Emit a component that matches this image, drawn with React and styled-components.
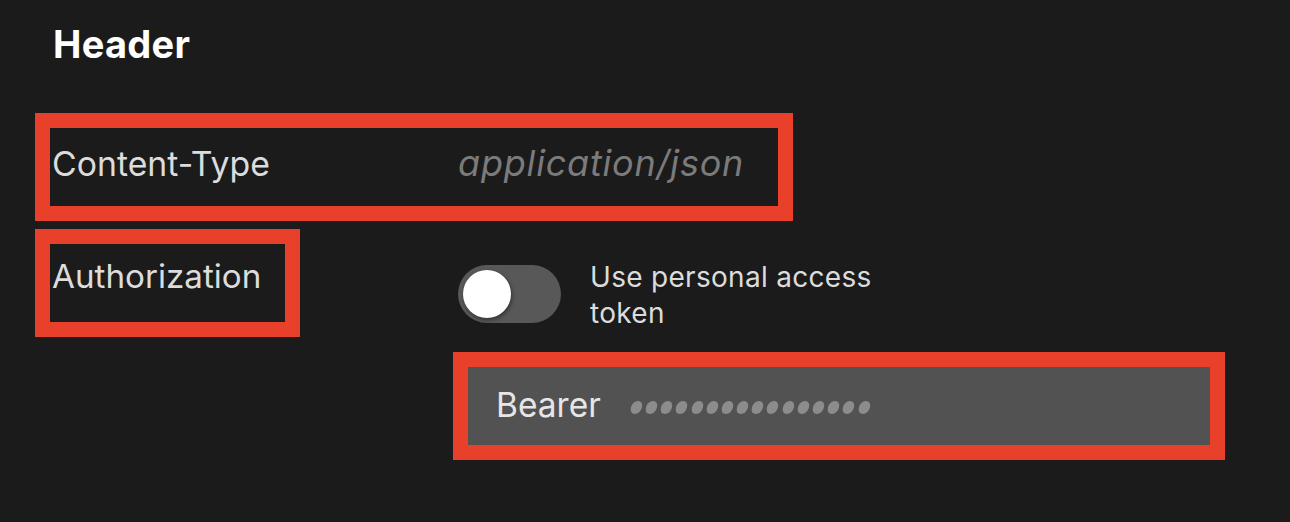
import React from "react";
import styled, { createGlobalStyle } from "styled-components";

const Global = createGlobalStyle`
  html, body { margin: 0; padding: 0; background: #1b1b1b; }
  body { font-family: Inter, "Liberation Sans", Arial, sans-serif; color: #dcdcdc; }
`;

const Page = styled.div`
  width: 1290px;
  height: 522px;
  box-sizing: border-box;
  padding: 22px 0 0 35px;
  background: #1b1b1b;
  overflow: hidden;
`;

const Title = styled.h2`
  margin: 0 0 47px 18px;
  font-size: 38px;
  line-height: 44px;
  font-weight: 700;
  color: #ffffff;
  letter-spacing: 0.3px;
`;

const Highlight = styled.div`
  box-sizing: border-box;
  border: 15px solid #e8402a;
  width: ${(p) => p.$w}px;
  height: 108px;
  display: flex;
  align-items: center;
`;

const FieldRow = styled.div`
  display: flex;
  align-items: center;
  width: 100%;
  height: 100%;
  padding: 0 0 ${(p) => p.$pb ?? 8}px 2px;
  box-sizing: border-box;
`;

const Label = styled.span`
  font-size: ${(p) => p.$size ?? 33.8}px;
  font-weight: 400;
  color: #dcdcdc;
  width: ${(p) => (p.$w ? `${p.$w}px` : "auto")};
  flex: none;
`;

const Placeholder = styled.span`
  font-size: 36px;
  font-style: italic;
  color: #7b7b7b;
  letter-spacing: 0.8px;
`;

const AuthRow = styled.div`
  display: flex;
  align-items: flex-start;
  margin-top: 8px;
  gap: 153px;
`;

const RightCol = styled.div`
  display: flex;
  flex-direction: column;
  padding-top: 30px;
`;

const ToggleRow = styled.div`
  display: flex;
  align-items: flex-start;
  gap: 29px;
  padding-left: 5px;
  height: 72px;
`;

const Track = styled.div`
  width: 103px;
  height: 58px;
  margin-top: 6px;
  border-radius: 29px;
  background: #585858;
  display: flex;
  align-items: center;
  padding: 0 5px;
  box-sizing: border-box;
  flex: none;
`;

const Knob = styled.div`
  width: 48px;
  height: 48px;
  border-radius: 50%;
  background: #ffffff;
  box-shadow: 1px 2px 4px rgba(0, 0, 0, 0.45);
`;

const ToggleText = styled.span`
  font-size: 28px;
  line-height: 36px;
  color: #dcdcdc;
  width: 310px;
  letter-spacing: 0.3px;
`;

const BearerBox = styled(Highlight)`
  margin-top: 21px;
`;

const BearerField = styled.div`
  width: 100%;
  height: 100%;
  background: #525252;
  display: flex;
  align-items: center;
  padding: 0 0 2px 28px;
  box-sizing: border-box;
  gap: 30px;
`;

const BearerLabel = styled.span`
  font-size: 33.5px;
  color: #e6e6e6;
`;

const Dots = styled.span`
  display: flex;
  gap: 4.5px;
  margin-top: 4px;
`;

const Dot = styled.span`
  width: 10.7px;
  height: 12.5px;
  border-radius: 50%;
  background: #8c8c8c;
  transform: skewX(-14deg);
`;

export default function App() {
  return (
    <>
      <Global />
      <Page>
        <Title>Header</Title>
        <Highlight $w={758}>
          <FieldRow>
            <Label $w={406}>Content-Type</Label>
            <Placeholder>application/json</Placeholder>
          </FieldRow>
        </Highlight>
        <AuthRow>
          <Highlight $w={265}>
            <FieldRow $pb={14}>
              <Label $size={33.2}>Authorization</Label>
            </FieldRow>
          </Highlight>
          <RightCol>
            <ToggleRow>
              <Track>
                <Knob />
              </Track>
              <ToggleText>Use personal access token</ToggleText>
            </ToggleRow>
            <BearerBox $w={772}>
              <BearerField>
                <BearerLabel>Bearer</BearerLabel>
                <Dots>
                  {Array.from({ length: 16 }).map((_, i) => (
                    <Dot key={i} />
                  ))}
                </Dots>
              </BearerField>
            </BearerBox>
          </RightCol>
        </AuthRow>
      </Page>
    </>
  );
}
